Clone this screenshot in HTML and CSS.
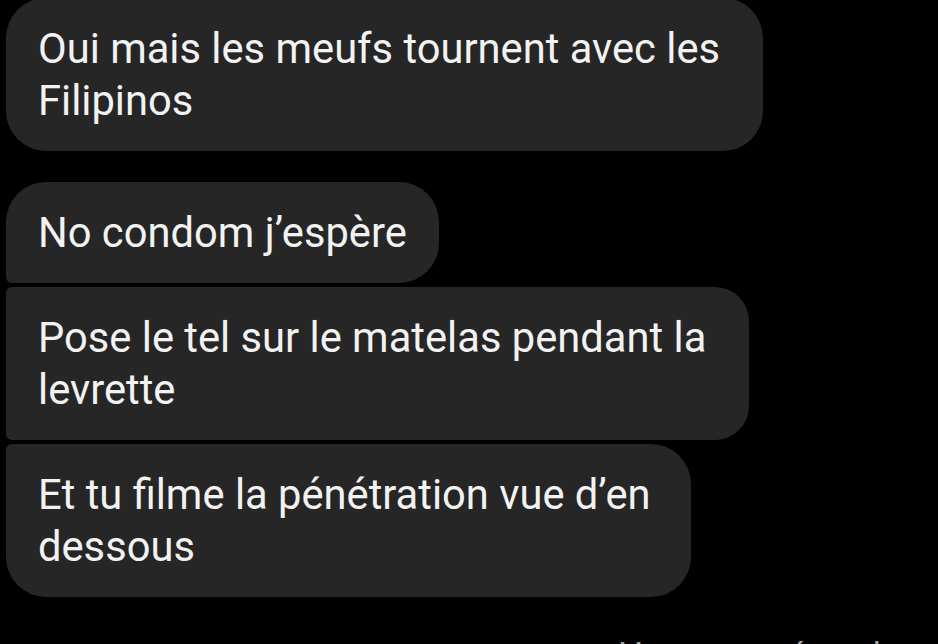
FILE: index.html
```html
<!DOCTYPE html>
<html>
<head>
    <meta charset="UTF-8">
    <title>Messages</title>
    <link rel="stylesheet" href="styles.css">
</head>
<body>

<div id="thread">
    <div class="msg first wrap">Oui mais les meufs tournent avec les<br>Filipinos</div>

    <div class="group">
        <div class="msg top">No condom j’espère</div>
        <div class="msg mid wrap">Pose le tel sur le matelas pendant la<br>levrette</div>
        <div class="msg bottom wrap">Et tu filme la pénétration vue d’en<br>dessous</div>
    </div>

    <div class="status">Vous avez répondu</div>
</div>

</body>
</html>
```

FILE: styles.css
```css
*, *::after, *::before {
    box-sizing: border-box;
}

html, body {
    background-color: #000;
    height: 100%;
    width: 100%;
    padding: 0;
    margin: 0;
    overflow: hidden;
    font-family: Roboto, "Noto Sans", sans-serif;
}

#thread {
    display: flex;
    flex-direction: column;
    align-items: flex-start;
    padding-left: 6px;
    margin-top: -2px;
}

.group {
    display: flex;
    flex-direction: column;
    align-items: flex-start;
    gap: 4px;
    margin-top: 31px;
}

.msg {
    background: #262626;
    color: #f2f2f2;
    font-size: 41.7px;
    line-height: 52px;
    padding: 24.5px 32px;
    white-space: nowrap;
    border-radius: 40px;
}

.msg.wrap {
    padding-right: 43px;
}

.msg.top {
    border-bottom-left-radius: 6px;
}

.msg.mid {
    border-radius: 6px 34px 34px 6px;
}

.msg.bottom {
    border-top-left-radius: 6px;
    padding-right: 40px;
}

.status {
    align-self: stretch;
    margin-top: 38px;
    padding-left: 614px;
    color: #a8a8a8;
    font-size: 33px;
    line-height: 40px;
    white-space: nowrap;
}
```
